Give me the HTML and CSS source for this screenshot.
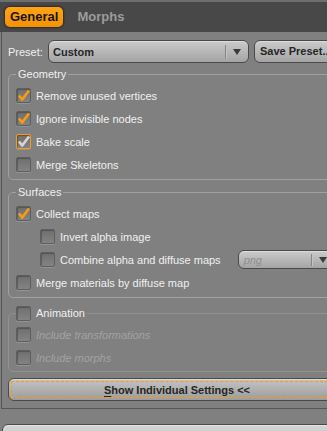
FILE: index.html
```html
<!DOCTYPE html>
<html lang="en">
<head>
  <meta charset="UTF-8" />
  <title>Export Options</title>
  <link rel="stylesheet" href="styles.css">
</head>
<body>

  <!-- Tabs -->
  <div class="tabbar">
    <span class="tab active">General</span>
    <span class="tab">Morphs</span>
  </div>

  <div class="pane">
    <div class="preset-row">
      <span class="preset-label">Preset:</span>
      <div class="combo preset-combo">
        <span class="combo-text">Custom</span>
        <span class="combo-sep"></span>
        <svg class="combo-arrow" width="8" height="6" viewBox="0 0 8 6"><polygon points="0,0 8,0 4,6" fill="#3a3a3a"/></svg>
      </div>
      <div class="btn save-btn">Save Preset...</div>
    </div>

    <!-- Geometry -->
    <fieldset class="group">
      <legend>Geometry</legend>
      <div class="row"><span class="cb checked"><svg viewBox="0 0 15 15"><polyline points="3,7.5 6.2,11.5 13,2.5"/></svg></span>Remove unused vertices</div>
      <div class="row"><span class="cb checked"><svg viewBox="0 0 15 15"><polyline points="3,7.5 6.2,11.5 13,2.5"/></svg></span>Ignore invisible nodes</div>
      <div class="row"><span class="cb checked focus"><svg viewBox="0 0 15 15"><polyline points="3,7.5 6.2,11.5 13,2.5"/></svg></span>Bake scale</div>
      <div class="row"><span class="cb"></span>Merge Skeletons</div>
    </fieldset>

    <!-- Surfaces -->
    <fieldset class="group">
      <legend>Surfaces</legend>
      <div class="row"><span class="cb checked"><svg viewBox="0 0 15 15"><polyline points="3,7.5 6.2,11.5 13,2.5"/></svg></span>Collect maps</div>
      <div class="row sub"><span class="cb"></span>Invert alpha image</div>
      <div class="row sub">
        <span class="cb"></span>Combine alpha and diffuse maps
        <div class="combo small-combo">
          <span class="combo-text">png</span>
          <span class="combo-sep"></span>
          <svg class="combo-arrow" width="8" height="6" viewBox="0 0 8 6"><polygon points="0,0 8,0 4,6" fill="#3a3a3a"/></svg>
        </div>
      </div>
      <div class="row"><span class="cb"></span>Merge materials by diffuse map</div>
    </fieldset>

    <!-- Animation -->
    <fieldset class="group disabled">
      <legend><div class="legend-check"><span class="cb"></span>Animation</div></legend>
      <div class="row off"><span class="cb"></span>Include transformations</div>
      <div class="row off"><span class="cb"></span>Include morphs</div>
    </fieldset>

    <div class="btn toggle-btn"><span class="focus-rect"><u>S</u>how Individual Settings &lt;&lt;</span></div>
  </div>

  <div class="btn footer-btn"></div>

</body>
</html>
```

FILE: styles.css
```css
html, body {
  margin: 0;
  padding: 0;
  overflow: hidden;
}

body {
  width: 360px;
  height: 431px;
  background: #808080;
  font-family: 'Liberation Sans', Arial, sans-serif;
  font-size: 11px;
  color: #f0f0f0;
}

/* tab strip */
.tabbar {
  height: 30px;
  border-top: 2px solid #6e6e6e;
  background: #484848;
  display: flex;
  align-items: flex-start;
  gap: 9px;
  padding-left: 5px;
  box-sizing: content-box;
}

.tab {
  margin-top: 5px;
  height: 20px;
  line-height: 20px;
  padding: 0 5px;
  font-size: 13px;
  font-weight: bold;
  color: #9c9c9c;
}

.tab.active {
  background: linear-gradient(#ffa415, #f59200);
  color: #161616;
  border-radius: 5px;
  box-shadow: 0 0 2px 1px #2b2b2b;
}

/* main pane */
.pane {
  margin-left: 1px;
  width: 338px;
  border-left: 1px solid #565656;
  border-bottom: 1px solid #565656;
  padding: 8px 6px 7px;
}

.preset-row {
  display: flex;
  align-items: center;
  height: 23px;
}

.preset-label {
  width: 40px;
}

.combo, .btn {
  box-sizing: border-box;
  border: 1px solid #4a4a4a;
  border-radius: 6px;
  background: linear-gradient(#cbcbcb, #a4a4a4);
  box-shadow: inset 0 1px 0 rgba(255,255,255,0.35);
  color: #262626;
  font-weight: bold;
}

.combo {
  display: flex;
  align-items: center;
}

.preset-combo {
  width: 201px;
  height: 23px;
}

.combo-text {
  flex: 1;
  padding-left: 4px;
}

.combo-sep {
  width: 1px;
  height: 14px;
  background: #858585;
  border-right: 1px solid #c4c4c4;
}

.combo-arrow {
  margin: 1px 7px 0 6px;
}

.save-btn {
  margin-left: 5px;
  width: 90px;
  height: 23px;
  line-height: 21px;
  padding-left: 5px;
  white-space: nowrap;
}

/* groups */
.group {
  margin: 6px 0 0;
  padding: 3px 7px 3px;
  border: 1px solid #a0a0a0;
  border-radius: 5px;
  min-width: 0;
}

.group:first-of-type {
  margin-top: 5px;
}

.group legend {
  padding: 0 2px;
  line-height: 13px;
  color: #f0f0f0;
}

.group.disabled {
  margin-top: 8px;
  padding-top: 2px;
  padding-bottom: 2px;
  border-color: #919191;
}

.group.disabled legend {
  padding: 0 2px 0 0;
  line-height: 15px;
}

.legend-check {
  display: flex;
  align-items: center;
  gap: 5px;
  height: 15px;
}

.row {
  display: flex;
  align-items: center;
  gap: 5px;
  height: 23px;
  white-space: nowrap;
}

.row.sub {
  padding-left: 24px;
}

.row.off {
  color: #a2a2a2;
  font-style: italic;
}

/* checkboxes */
.cb {
  box-sizing: border-box;
  width: 15px;
  height: 15px;
  flex: none;
  border: 1px solid #5e5e5e;
  border-radius: 2px;
  background: linear-gradient(#6f6f6f, #838383);
  box-shadow: inset 1px 1px 1px rgba(0,0,0,0.25), 0 1px 0 rgba(255,255,255,0.15);
  position: relative;
}

.cb svg {
  position: absolute;
  left: -1px;
  top: -1px;
  width: 15px;
  height: 15px;
}

.cb polyline {
  fill: none;
  stroke: #ff9a0a;
  stroke-width: 2.6;
  stroke-linejoin: round;
}

.cb.focus {
  border-color: #ff9a0a;
}

.cb.focus polyline {
  stroke: #d6d6d6;
}

.small-combo {
  margin-left: 12px;
  width: 96px;
  height: 19px;
  font-weight: normal;
}

.small-combo .combo-text {
  font-style: italic;
  color: #8e8e8e;
  padding-left: 5px;
}

.small-combo .combo-sep {
  height: 12px;
}

.small-combo .combo-arrow {
  margin: 1px 6px 0 6px;
}

/* bottom buttons */
.toggle-btn {
  margin-top: 6px;
  height: 23px;
  padding: 2px;
  text-align: center;
  background: linear-gradient(#c4c4c4, #9c9c9c);
}

.focus-rect {
  display: block;
  height: 17px;
  line-height: 16px;
  box-sizing: border-box;
  border: 1px dashed #ff9a0a;
  border-radius: 1px;
}

.focus-rect u {
  text-decoration-thickness: 1px;
  text-underline-offset: 2px;
}

.footer-btn {
  margin: 15px 0 0 2px;
  width: 350px;
  height: 30px;
  background: linear-gradient(#d6d6d6, #bcbcbc);
}
```
